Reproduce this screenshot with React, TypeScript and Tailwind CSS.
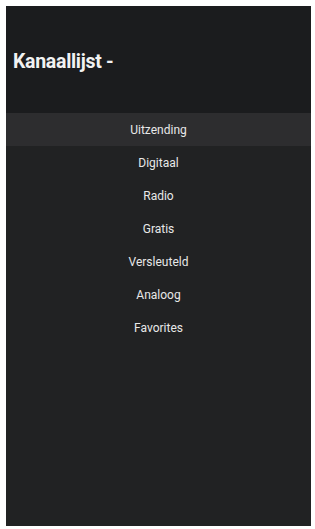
import React from "react";

const items = ["Uitzending", "Digitaal", "Radio", "Gratis", "Versleuteld", "Analoog", "Favorites"];

export default function App() {
  return (
    <div className="w-[315px] h-[529px] bg-white pl-[6px] pt-[6px] pr-[4px] pb-[3px]" style={{ fontFamily: "Roboto, 'Liberation Sans', sans-serif" }}>
      <div className="w-full h-full flex flex-col bg-[#212223]">
        <div className="h-[107px] bg-[#1b1c1e] flex items-center pl-[7px] pt-[5px]">
          <span className="text-[19.5px] font-bold text-[#f2f2f2] tracking-[-0.3px]">Kanaallijst -</span>
        </div>
        <div className="flex flex-col">
          {items.map((t, i) => (
            <div
              key={t}
              className={`h-[33px] flex items-center justify-center text-[12px] text-[#e8e8e8] ${i === 0 ? "bg-[#2d2d2f]" : ""}`}
            >
              {t}
            </div>
          ))}
        </div>
      </div>
    </div>
  );
}
